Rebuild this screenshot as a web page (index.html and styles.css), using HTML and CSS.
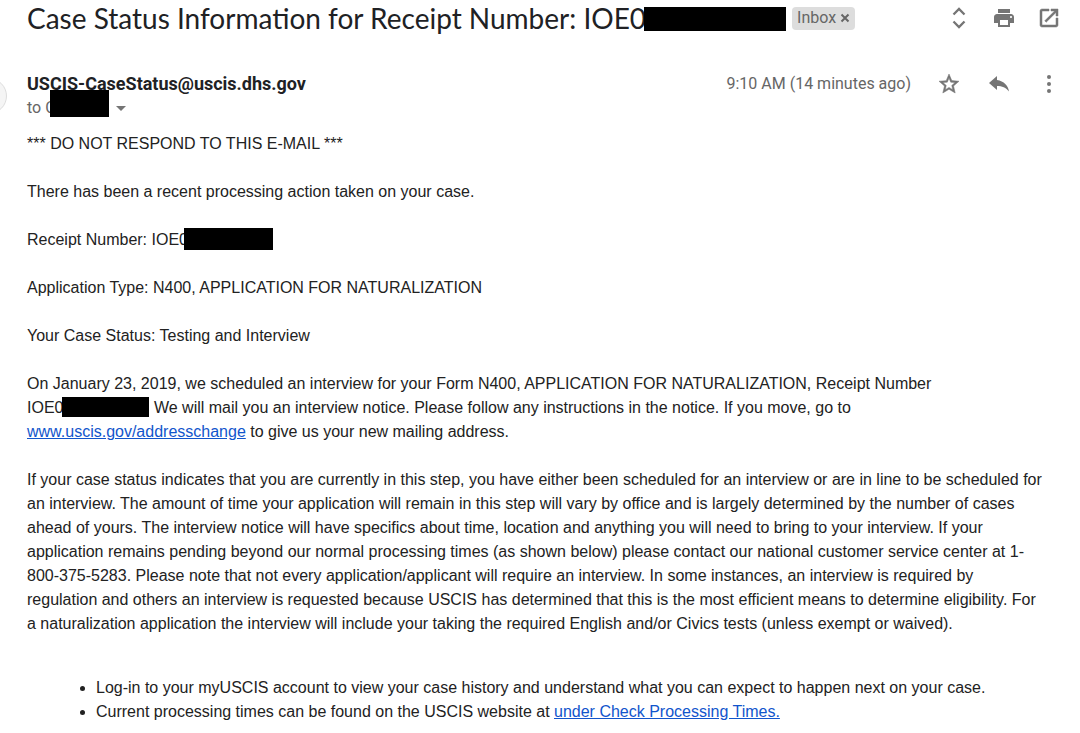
FILE: index.html
```html
<!DOCTYPE html>
<html lang="en">
<head>
    <meta charset="UTF-8">
    <meta name="viewport" content="width=device-width, initial-scale=1.0">
    <title>Case Status Information</title>
    <link rel="stylesheet" href="styles.css">
</head>
<body>
    <header class="subject-bar">
        <h1 class="subject">Case Status Information for Receipt Number: IOE0<span class="redacted redacted-subject"></span></h1>
        <span class="label">Inbox <button type="button" class="label-remove" aria-label="Remove label Inbox"><svg width="10" height="10" viewBox="0 0 10 10"><path d="M1.500 1.500l7 7M8.500 1.500l-7 7" stroke="#666" stroke-width="2"/></svg></button></span>
        <div class="actions">
            <button type="button" class="icon-btn" aria-label="Expand all">
                <svg width="24" height="24" viewBox="0 0 24 24"><path d="M6.500 8.500L12 3l5.500 5.500M6.500 15.500L12 21l5.500-5.500" fill="none" stroke="#757575" stroke-width="2.300"/></svg>
            </button>
            <button type="button" class="icon-btn" aria-label="Print all">
                <svg width="24" height="24" viewBox="0 0 24 24"><path fill="#757575" d="M19 8H5c-1.660 0-3 1.340-3 3v6h4v4h12v-4h4v-6c0-1.660-1.340-3-3-3zm-3 11H8v-5h8v5zm3-7c-.55 0-1-.45-1-1s.45-1 1-1 1 .45 1 1-.45 1-1 1zm-1-9H6v4h12V3z"/></svg>
            </button>
            <button type="button" class="icon-btn" aria-label="In new window">
                <svg width="24" height="24" viewBox="0 0 24 24"><path fill="#757575" stroke="#757575" stroke-width=".5" d="M19 19H5V5h7V3H5c-1.110 0-2 .9-2 2v14c0 1.100.89 2 2 2h14c1.100 0 2-.9 2-2v-7h-2v7zM14 3v2h3.590l-9.830 9.830 1.410 1.410L19 6.410V10h2V3h-7z"/></svg>
            </button>
        </div>
    </header>

    <section class="message-head">
        <div class="avatar"></div>
        <div class="sender">
            <h2 class="sender-name">USCIS-CaseStatus@uscis.dhs.gov</h2>
            <div class="recipient">to C<span class="redacted redacted-name"></span><button type="button" class="details-btn" aria-label="Show details"></button></div>
        </div>
        <span class="date">9:10 AM (14 minutes ago)</span>
        <div class="actions message-actions">
            <button type="button" class="icon-btn" aria-label="Star">
                <svg width="24" height="24" viewBox="0 0 24 24"><path fill="#757575" stroke="#757575" stroke-width=".5" d="M22 9.240l-7.190-.62L12 2 9.190 8.630 2 9.240l5.460 4.730L5.820 21 12 17.270 18.180 21l-1.630-7.030L22 9.240zM12 15.400l-3.760 2.270 1-4.280-3.320-2.880 4.380-.38L12 6.100l1.710 4.040 4.380.38-3.320 2.880 1 4.280L12 15.400z"/></svg>
            </button>
            <button type="button" class="icon-btn" aria-label="Reply">
                <svg width="24" height="24" viewBox="0 0 24 24"><path fill="#757575" d="M10 8V4l-8 7 8 7v-4.100c5 0 9 1.600 12 5.600-1-6-5-10.500-12-11.500z"/></svg>
            </button>
            <button type="button" class="icon-btn" aria-label="More">
                <svg width="24" height="24" viewBox="0 0 24 24" fill="#757575"><circle cx="12" cy="5" r="2"/><circle cx="12" cy="12" r="2"/><circle cx="12" cy="19" r="2"/></svg>
            </button>
        </div>
    </section>

    <main class="message">
        <p>*** DO NOT RESPOND TO THIS E-MAIL ***</p>
        <p>There has been a recent processing action taken on your case.</p>
        <p>Receipt Number: IOE0<span class="redacted redacted-receipt"></span></p>
        <p>Application Type: N400, APPLICATION FOR NATURALIZATION</p>
        <p>Your Case Status: Testing and Interview</p>
        <p>On January 23, 2019, we scheduled an interview for your Form N400, APPLICATION FOR NATURALIZATION, Receipt Number <span class="receipt">IOE0<span class="redacted redacted-inline"></span></span> We will mail you an interview notice. Please follow any instructions in the notice. If you move, go to <a href="#">www.uscis.gov/addresschange</a> to give us your new mailing address.</p>
        <p>If your case status indicates that you are currently in this step, you have either been scheduled for an interview or are in line to be scheduled for an interview. The amount of time your application will remain in this step will vary by office and is largely determined by the number of cases ahead of yours. The interview notice will have specifics about time, location and anything you will need to bring to your interview. If your application remains pending beyond our normal processing times (as shown below) please contact our national customer service center at 1-800-375-5283. Please note that not every application/applicant will require an interview. In some instances, an interview is required by regulation and others an interview is requested because USCIS has determined that this is the most efficient means to determine eligibility. For a naturalization application the interview will include your taking the required English and/or Civics tests (unless exempt or waived).</p>
        <ul>
            <li>Log-in to your myUSCIS account to view your case history and understand what you can expect to happen next on your case.</li>
            <li>Current processing times can be found on the USCIS website at <a href="#">under Check Processing Times.</a></li>
        </ul>
    </main>
</body>
</html>
```
FILE: styles.css
```css
* {
    box-sizing: border-box;
}
body {
    margin: 0;
    padding: 0 19px 8px 27px;
    background-color: #fff;
    color: #222;
    font-family: "Liberation Sans", Arial, sans-serif;
    font-size: 16px;
    line-height: 24px;
}
h1, h2, p, ul {
    margin: 0;
}
button {
    padding: 0;
    border: none;
    background: none;
    cursor: pointer;
}
a {
    color: #15c;
}
.subject-bar {
    display: flex;
    align-items: center;
    height: 36px;
}
.subject {
    color: #202124;
    font-family: Lato, sans-serif;
    font-size: 28px;
    font-weight: 400;
    line-height: 36px;
    white-space: nowrap;
}
.label {
    display: flex;
    align-items: center;
    gap: 4px;
    height: 23px;
    margin-left: 6px;
    padding: 0 5px;
    border-radius: 4px;
    background-color: #ddd;
    color: #666;
    font-family: Roboto, sans-serif;
    font-size: 16px;
}
.label-remove, .icon-btn {
    display: flex;
}
.actions {
    display: flex;
    gap: 21px;
    margin-left: auto;
}
.message-actions {
    gap: 26px;
    margin-left: 26px;
}
.message-head {
    position: relative;
    display: flex;
    align-items: flex-start;
    padding-top: 36px;
    color: #666;
    font-family: Roboto, sans-serif;
}
.avatar {
    position: absolute;
    top: 42px;
    left: -56px;
    width: 36px;
    height: 36px;
    border: 1px solid #ddd;
    border-radius: 50%;
    background-color: #f5f5f5;
}
.sender {
    flex: 1;
}
.sender-name {
    color: #202124;
    font-size: 18px;
    font-weight: 700;
    line-height: 24px;
}
.recipient {
    display: flex;
    align-items: center;
    height: 24px;
}
.details-btn {
    margin-left: 7px;
    border-top: 5px solid #757575;
    border-right: 5px solid transparent;
    border-left: 5px solid transparent;
}
.message {
    padding: 12px 17px 0 0;
}
.message p + p {
    margin-top: 24px;
}
.message ul {
    margin-top: 40px;
    padding-left: 69px;
}
.receipt {
    white-space: nowrap;
}

/* black bars over private details */
.redacted {
    position: relative;
    display: inline-block;
    margin-top: -4px;
    background-color: #000;
    vertical-align: middle;
}
.redacted-subject {
    width: 142px;
    height: 24px;
    margin-bottom: 2px;
    margin-left: -2px;
}
.redacted-name {
    width: 59px;
    height: 27px;
    margin-bottom: 5px;
    margin-left: -6px;
}
.redacted-receipt {
    width: 89px;
    height: 22px;
    margin-left: -4px;
}
.redacted-inline {
    width: 87px;
    height: 20px;
    margin-left: -1px;
}
```
